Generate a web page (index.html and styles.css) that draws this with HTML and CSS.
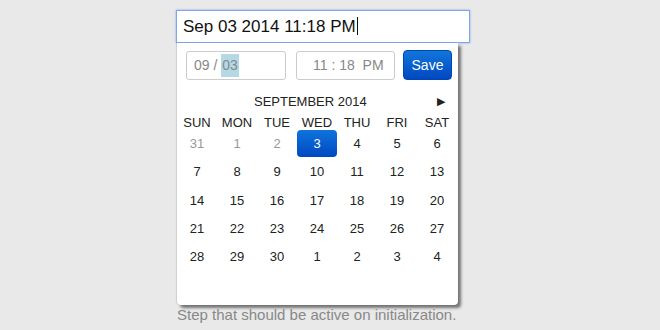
FILE: index.html
```html
<!DOCTYPE html>
<html lang="en">
<head>
    <meta charset="UTF-8">
    <title>Date Time Picker</title>
    <link rel="stylesheet" href="styles.css">
</head>
<body>
    <div class="picker">
        <div class="main-input">Sep 03 2014 11:18 PM<span class="caret"></span></div>
        <div class="popup">
            <div class="controls">
                <div class="field date-field">09 / <span class="sel">03</span></div>
                <div class="field time-field">11 : 18 &nbsp;PM</div>
                <button class="save">Save</button>
            </div>
            <div class="month">
                <span class="month-title">SEPTEMBER 2014</span>
                <span class="next">&#9654;</span>
            </div>
            <div class="days">
                <div class="dow">SUN</div><div class="dow">MON</div><div class="dow">TUE</div><div class="dow">WED</div><div class="dow">THU</div><div class="dow">FRI</div><div class="dow">SAT</div>
                <div class="day other">31</div><div class="day other">1</div><div class="day other">2</div><div class="day active">3</div><div class="day">4</div><div class="day">5</div><div class="day">6</div>
                <div class="day">7</div><div class="day">8</div><div class="day">9</div><div class="day">10</div><div class="day">11</div><div class="day">12</div><div class="day">13</div>
                <div class="day">14</div><div class="day">15</div><div class="day">16</div><div class="day">17</div><div class="day">18</div><div class="day">19</div><div class="day">20</div>
                <div class="day">21</div><div class="day">22</div><div class="day">23</div><div class="day">24</div><div class="day">25</div><div class="day">26</div><div class="day">27</div>
                <div class="day">28</div><div class="day">29</div><div class="day">30</div><div class="day">1</div><div class="day">2</div><div class="day">3</div><div class="day">4</div>
            </div>
        </div>
        <p class="hint">Step that should be active on initialization.</p>
    </div>
</body>
</html>
```

FILE: styles.css
```css
body {
    margin: 0;
    background: #e9e9e9;
    font-family: 'Liberation Sans', Arial, sans-serif;
    color: #222;
}
.picker {
    width: 294px;
    margin-left: 176px;
    padding-top: 10px;
}
.main-input {
    box-sizing: border-box;
    height: 33px;
    border: 1px solid #7fa5ea;
    box-shadow: 0 0 2px rgba(90, 140, 230, 0.7);
    background: #fff;
    font-size: 17px;
    line-height: 31px;
    padding-left: 6px;
    color: #111;
}
.caret {
    display: inline-block;
    width: 1px;
    height: 18px;
    background: #111;
    vertical-align: -3px;
    margin-left: 1px;
}
.popup {
    box-sizing: border-box;
    width: 281px;
    height: 262px;
    margin-left: 1px;
    background: #fff;
    border-radius: 0 0 4px 4px;
    box-shadow: 3px 3px 3px rgba(0, 0, 0, 0.5), -1px 0 1px rgba(0, 0, 0, 0.12);
}
.controls {
    display: flex;
    align-items: center;
    padding: 7px 0 0 9px;
}
.field {
    box-sizing: border-box;
    height: 29px;
    border: 1px solid #ccc;
    border-radius: 3px;
    font-size: 14px;
    line-height: 27px;
    color: #888;
}
.date-field {
    width: 100px;
    padding-left: 7px;
}
.sel {
    background: #b4d8e6;
    padding: 3px 1px 4px;
}
.time-field {
    width: 99px;
    margin-left: 10px;
    padding-left: 16px;
}
.save {
    width: 49px;
    height: 30px;
    margin-left: 8px;
    border: 1px solid #0046b4;
    border-radius: 4px;
    background: linear-gradient(#1276dc, #0048c0);
    color: #fff;
    font-family: 'Liberation Sans', Arial, sans-serif;
    font-size: 14px;
    padding: 0;
}
.month {
    display: flex;
    align-items: center;
    height: 20px;
    margin-top: 11px;
    font-size: 13px;
}
.month-title {
    margin-left: 77px;
}
.next {
    margin-left: auto;
    margin-right: 13px;
    font-size: 11px;
}
.days {
    display: grid;
    grid-template-columns: repeat(7, 40px);
    grid-template-rows: 20px;
    grid-auto-rows: 28.25px;
    margin-top: 2px;
}
.dow {
    line-height: 20px;
    text-align: center;
    font-size: 13px;
}
.day {
    text-align: center;
    line-height: 28px;
    font-size: 13px;
    margin: -3px 0 3px;
}
.day.other {
    color: #999;
}
.day.active {
    background: linear-gradient(#0f74dc, #0048c2);
    color: #fff;
    border-radius: 4px;
    line-height: 27px;
    margin: -3px 0 4px;
}
.hint {
    margin: 1px 0 0 1px;
    font-size: 15px;
    color: #888;
}
```
